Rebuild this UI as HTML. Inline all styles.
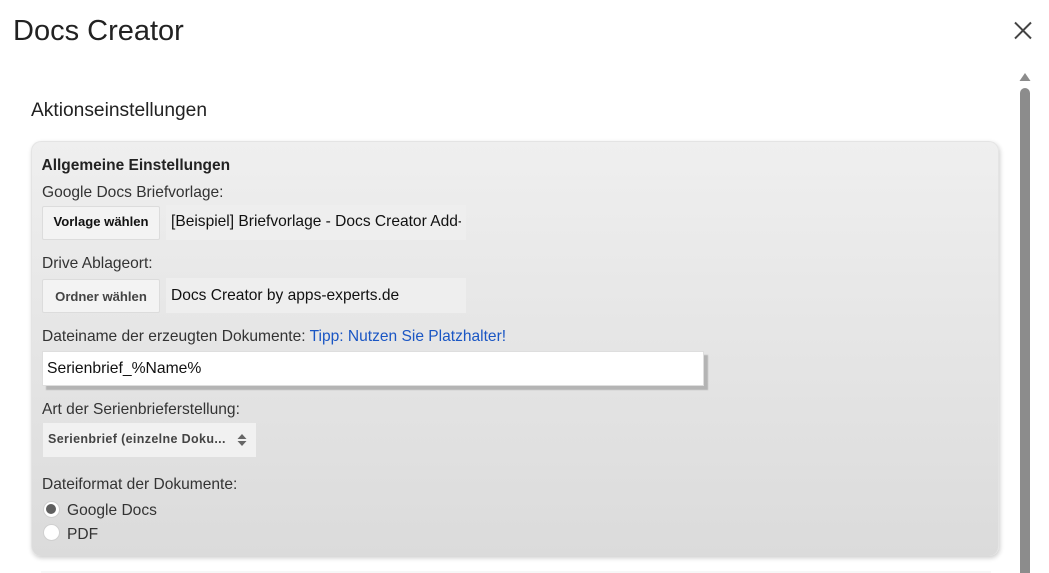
<!DOCTYPE html>
<html><head><meta charset="utf-8">
<style>
html,body{margin:0;padding:0;background:#fff}
#w{position:relative;width:1049px;height:573px;overflow:hidden;background:#fff;font-family:"Liberation Sans",sans-serif}
.a{position:absolute;white-space:nowrap}
.l{font-size:15.55px;color:#333;line-height:20px;left:42px}
.btn{left:42px;width:116px;height:32px;background:#f3f3f3;border:1px solid #dcdcdc;border-radius:2px;font-size:13.1px;font-weight:bold;text-align:center;line-height:30px}
.box{left:166px;width:300px;height:35px;background:#eeeeee}
.box div{position:absolute;left:5px;top:0;width:290px;height:35px;line-height:33px;font-size:15.55px;color:#111;overflow:hidden}
</style></head><body><div id="w">
<div class="a" style="left:13px;top:13px;font-size:29px;line-height:36px;color:#222">Docs Creator</div>
<svg class="a" style="left:1013px;top:20px" width="20" height="20" viewBox="0 0 20 20"><path d="M2 2.5L18 18.5M18 2.5L2 18.5" stroke="#444" stroke-width="2" fill="none"/></svg>
<svg class="a" style="left:1019px;top:72px" width="12" height="10" viewBox="0 0 12 10"><path d="M6 1L11.5 9H.5Z" fill="#8c8c8c"/></svg>
<div class="a" style="left:1020px;top:88px;width:10px;height:485px;background:#8c8c8c;border-radius:5px 5px 0 0"></div>
<div class="a" style="left:31px;top:100px;font-size:19.2px;line-height:22px;color:#222">Aktionseinstellungen</div>
<div class="a" style="left:31px;top:141px;width:966px;height:414px;border:1px solid #e4e4e4;border-width:1px 1px 0 1px;border-radius:10px;background:linear-gradient(#efefef,#dbdbdb);box-shadow:1px 2px 5px rgba(0,0,0,.2)"></div>
<div class="a" style="left:41px;top:571px;width:950px;height:2px;background:#f7f7f7"></div>
<div class="a" style="left:41.5px;top:156px;font-size:15.5px;font-weight:bold;line-height:20px;color:#222">Allgemeine Einstellungen</div>
<div class="a l" style="top:183px">Google Docs Briefvorlage:</div>
<div class="a btn" style="top:206px;color:#111">Vorlage wählen</div>
<div class="a box" style="top:205px"><div>[Beispiel] Briefvorlage - Docs Creator Add-on</div></div>
<div class="a l" style="top:254px">Drive Ablageort:</div>
<div class="a btn" style="top:279px;color:#444;line-height:33px">Ordner wählen</div>
<div class="a box" style="top:278px"><div style="line-height:35px">Docs Creator by apps-experts.de</div></div>
<div class="a l" style="top:327px">Dateiname der erzeugten Dokumente: <span style="color:#1a56c4">Tipp: Nutzen Sie Platzhalter!</span></div>
<div class="a" style="left:42px;top:351px;width:656px;height:33px;padding-left:4px;background:#fff;border:1px solid #dedede;line-height:33px;font-size:15.7px;color:#111;box-shadow:4px 4px 1px #b4b4b4">Serienbrief_%Name%</div>
<div class="a l" style="top:400px">Art der Serienbrieferstellung:</div>
<div class="a" style="left:43px;top:423px;width:208px;padding-left:5px;height:34px;line-height:33px;background:#f1f1f1;font-size:12.5px;font-weight:bold;color:#444;letter-spacing:.36px">Serienbrief (einzelne Doku...</div>
<svg class="a" style="left:236px;top:433px" width="12" height="14" viewBox="0 0 12 14"><path d="M6 1L10.5 6H1.5ZM6 13L1.5 8H10.5Z" fill="#666"/></svg>
<div class="a l" style="top:475px">Dateiformat der Dokumente:</div>
<div class="a" style="left:42.5px;top:500.5px;width:15px;height:15px;border-radius:50%;background:#fff;border:1px solid #d0d0d0"></div>
<div class="a" style="left:46px;top:504px;width:10px;height:10px;border-radius:50%;background:#5f5f5f"></div>
<div class="a l" style="left:67px;top:501px">Google Docs</div>
<div class="a" style="left:42.5px;top:524px;width:15px;height:15px;border-radius:50%;background:#fff;border:1px solid #d0d0d0"></div>
<div class="a l" style="left:67px;top:525px">PDF</div>
</div></body></html>
